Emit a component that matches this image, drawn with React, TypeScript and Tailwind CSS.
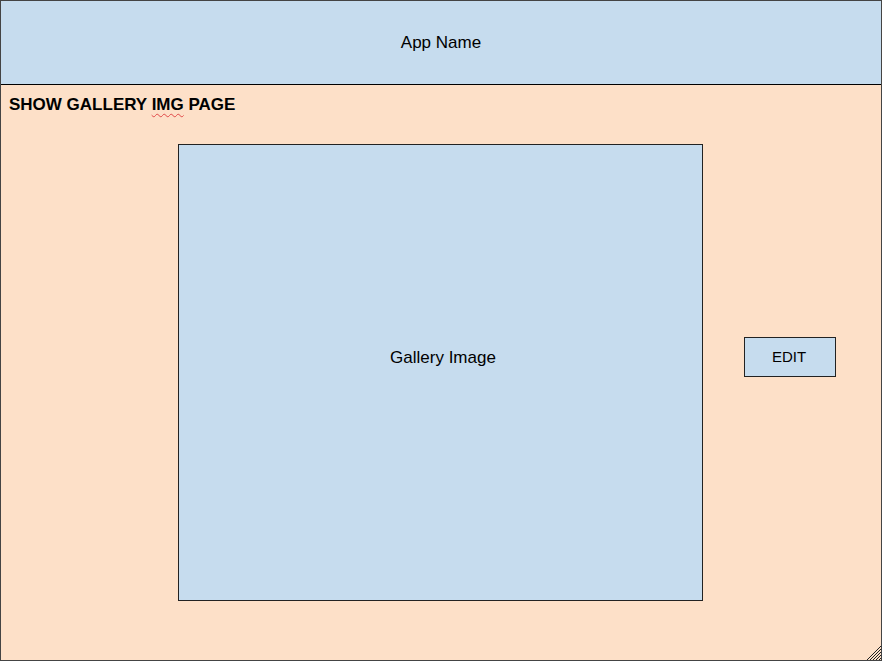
export default function App() {
  return (
    <div className="relative flex h-[661px] w-[882px] flex-col border border-[#444] bg-[#fde0c8] font-['Liberation_Sans',Arial,sans-serif] text-black">
      {/* header */}
      <div className="flex h-[84px] shrink-0 items-center justify-center border-b border-black bg-[#c6dcee] text-[17px]">
        App Name
      </div>

      {/* page body */}
      <div className="flex flex-col">
        <h1 className="pl-[8px] pt-[10px] text-[17px] font-bold leading-[20px]">
          SHOW GALLERY{" "}
          <span className="underline decoration-[#e04848] decoration-wavy decoration-1 underline-offset-[3px]">IMG</span>{" "}
          PAGE
        </h1>

        <div className="mt-[29px] flex items-start">
          <div className="ml-[177px] flex h-[457px] w-[525px] items-center justify-center border border-[#222] bg-[#c6dcee] pb-[30px] pl-[5px] text-[17px]">
            Gallery Image
          </div>
          <button className="ml-[41px] mt-[193px] flex h-[40px] w-[92px] items-center justify-center border border-[#222] bg-[#c6dcee] pr-[2px] text-[15px]">
            EDIT
          </button>
        </div>
      </div>

      {/* resize grip */}
      <svg className="absolute bottom-0 right-0" width="16" height="16" viewBox="0 0 16 16">
        <g stroke="#222" strokeWidth="1">
          <line x1="2" y1="16" x2="16" y2="2" />
          <line x1="5" y1="16" x2="16" y2="5" />
          <line x1="8" y1="16" x2="16" y2="8" />
          <line x1="11" y1="16" x2="16" y2="11" />
          <line x1="14" y1="16" x2="16" y2="14" />
        </g>
      </svg>
    </div>
  );
}
